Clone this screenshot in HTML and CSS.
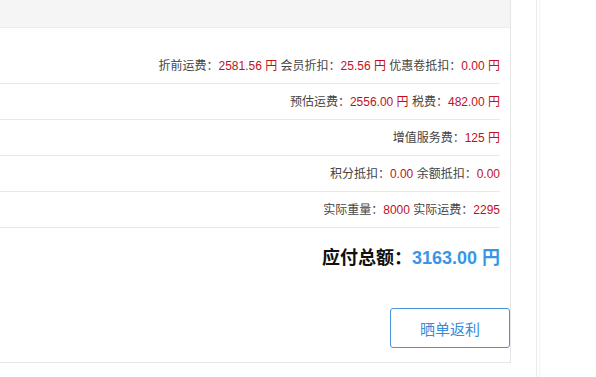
FILE: index.html
```html
<!DOCTYPE html>
<html lang="zh-CN">
<head>
  <meta charset="UTF-8" />
  <title>订单费用</title>
  <link rel="stylesheet" href="styles.css">
</head>
<body>
  <div class="page">
    <div class="panel">
      <div class="panel-head"></div>
      <div class="fees">
        <div class="fee-row">
          折前运费：<span class="val">2581.56 円</span> 会员折扣：<span class="val">25.56 円</span> 优惠卷抵扣：<span class="val">0.00 円</span>
        </div>
        <div class="fee-row">
          预估运费：<span class="val">2556.00 円</span> 税费：<span class="val">482.00 円</span>
        </div>
        <div class="fee-row">
          增值服务费：<span class="val">125 円</span>
        </div>
        <div class="fee-row">
          积分抵扣：<span class="val">0.00</span> 余额抵扣：<span class="val">0.00</span>
        </div>
        <div class="fee-row">
          实际重量：<span class="val">8000</span> 实际运费：<span class="val">2295</span>
        </div>
        <div class="total">
          应付总额：<span class="total-val">3163.00 円</span>
        </div>
      </div>
      <div class="actions">
        <button class="btn-share">晒单返利</button>
      </div>
    </div>
    <div class="side"></div>
  </div>
</body>
</html>
```

FILE: styles.css
```css
* {
  margin: 0;
  padding: 0;
  box-sizing: border-box;
}
body {
  font-family: "Liberation Sans", "Noto Sans CJK SC", sans-serif;
  background: #fff;
  color: #444;
  font-size: 12px;
}
.page {
  display: flex;
  height: 377px;
}
.panel {
  width: 511px;
  height: 363px;
  border-right: 1px solid #e6e6e6;
  border-bottom: 1px solid #e6e6e6;
}
.panel-head {
  height: 28px;
  background: #f5f5f5;
  border-bottom: 1px solid #ededed;
}
.fees {
  padding: 20px 10px 0 0;
}
.fee-row {
  height: 36px;
  padding-top: 2px;
  line-height: 33px;
  text-align: right;
  border-bottom: 1px solid #e8e8e8;
  color: #444;
}
.val {
  color: #c0101e;
}
.total {
  height: 60px;
  padding-top: 1px;
  line-height: 59px;
  text-align: right;
  font-size: 18px;
  font-weight: bold;
  color: #111;
}
.total-val {
  color: #3a95e4;
}
.actions {
  display: flex;
  justify-content: flex-end;
  padding-top: 20px;
}
.btn-share {
  width: 120px;
  height: 40px;
  border: 1px solid #4a94dc;
  border-radius: 3px;
  background: #fff;
  color: #3a8ad8;
  font-family: "Noto Sans CJK SC", sans-serif;
  font-size: 15px;
}
.side {
  margin-left: 25px;
  width: 4px;
  border-left: 1px solid #ececec;
  border-right: 1px solid #f4f4f4;
}
```
